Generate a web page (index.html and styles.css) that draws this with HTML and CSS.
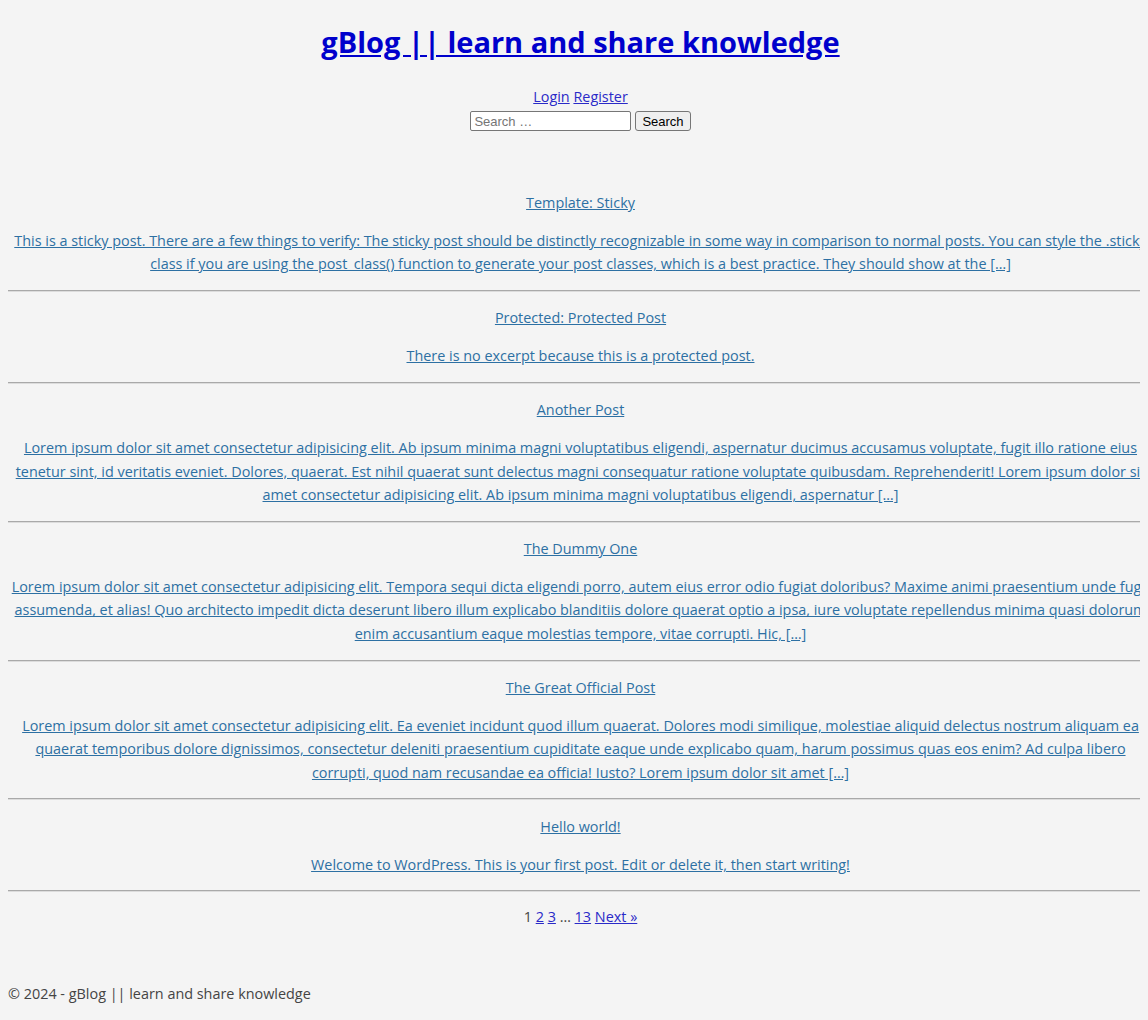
FILE: index.html
```html
<!DOCTYPE html>
<html lang="en">
<head>
<meta charset="utf-8">
<title>gBlog || learn and share knowledge</title>
<link rel="stylesheet" href="styles.css">
</head>
<body>
<div class="page">
  <header class="site-header">
    <h1 class="site-title"><a href="#">gBlog || learn and share knowledge</a></h1>
    <nav class="user-nav"><a href="#">Login</a> <a href="#">Register</a></nav>
    <form class="search-form">
      <input class="search-field" type="search" placeholder="Search …">
      <button class="search-submit" type="button">Search</button>
    </form>
  </header>

  <main class="posts">
    <article class="post">
      <p class="post-title"><a href="#">Template: Sticky</a></p>
      <p class="post-excerpt"><a href="#">This is a sticky post. There are a few things to verify: The sticky post should be distinctly recognizable in some way in comparison to normal posts. You can style the .sticky class if you are using the post_class() function to generate your post classes, which is a best practice. They should show at the […]</a></p>
    </article>
    <hr>
    <article class="post">
      <p class="post-title"><a href="#">Protected: Protected Post</a></p>
      <p class="post-excerpt"><a href="#">There is no excerpt because this is a protected post.</a></p>
    </article>
    <hr>
    <article class="post">
      <p class="post-title"><a href="#">Another Post</a></p>
      <p class="post-excerpt"><a href="#">Lorem ipsum dolor sit amet consectetur adipisicing elit. Ab ipsum minima magni voluptatibus eligendi, aspernatur ducimus accusamus voluptate, fugit illo ratione eius tenetur sint, id veritatis eveniet. Dolores, quaerat. Est nihil quaerat sunt delectus magni consequatur ratione voluptate quibusdam. Reprehenderit! Lorem ipsum dolor sit amet consectetur adipisicing elit. Ab ipsum minima magni voluptatibus eligendi, aspernatur […]</a></p>
    </article>
    <hr>
    <article class="post">
      <p class="post-title"><a href="#">The Dummy One</a></p>
      <p class="post-excerpt"><a href="#">Lorem ipsum dolor sit amet consectetur adipisicing elit. Tempora sequi dicta eligendi porro, autem eius error odio fugiat doloribus? Maxime animi praesentium unde fuga assumenda, et alias! Quo architecto impedit dicta deserunt libero illum explicabo blanditiis dolore quaerat optio a ipsa, iure voluptate repellendus minima quasi dolorum enim accusantium eaque molestias tempore, vitae corrupti. Hic, […]</a></p>
    </article>
    <hr>
    <article class="post">
      <p class="post-title"><a href="#">The Great Official Post</a></p>
      <p class="post-excerpt"><a href="#">Lorem ipsum dolor sit amet consectetur adipisicing elit. Ea eveniet incidunt quod illum quaerat. Dolores modi similique, molestiae aliquid delectus nostrum aliquam ea quaerat temporibus dolore dignissimos, consectetur deleniti praesentium cupiditate eaque unde explicabo quam, harum possimus quas eos enim? Ad culpa libero corrupti, quod nam recusandae ea officia! Iusto? Lorem ipsum dolor sit amet […]</a></p>
    </article>
    <hr>
    <article class="post">
      <p class="post-title"><a href="#">Hello world!</a></p>
      <p class="post-excerpt"><a href="#">Welcome to WordPress. This is your first post. Edit or delete it, then start writing!</a></p>
    </article>
    <hr>
    <p class="pagination"><span class="current">1</span> <a href="#">2</a> <a href="#">3</a> <span class="dots">…</span> <a href="#">13</a> <a href="#">Next »</a></p>
  </main>

  <footer class="site-footer">
    <p>© 2024 - gBlog || learn and share knowledge</p>
  </footer>
</div>
</body>
</html>
```

FILE: styles.css
```css
html, body {
  background: #f4f4f4;
}
body {
  margin: 8px;
  font-family: "Open Sans", "Liberation Sans", sans-serif;
  font-size: 14.4px;
  line-height: 23.4px;
  color: #333;
}
.page {
  width: 1145px;
}
.site-header {
  text-align: center;
}
.site-title {
  margin: 14px 0 24px;
  font-size: 29px;
  line-height: 40px;
  font-weight: 700;
}
.site-title a {
  color: #0000cc;
}
.user-nav {
  line-height: 22px;
}
.user-nav a {
  color: #2a2ac8;
}
.search-form {
  display: flex;
  justify-content: center;
  gap: 4px;
  margin-top: 3px;
}
.search-field {
  width: 161px;
  height: 20px;
  box-sizing: border-box;
  font-family: "Liberation Sans", Arial, sans-serif;
  font-size: 13px;
  padding: 1px 3px;
  border: 1px solid #767676;
  border-radius: 2px;
  background: #fff;
}
.search-field::placeholder {
  color: #757575;
}
.search-submit {
  height: 20px;
  font-family: "Liberation Sans", Arial, sans-serif;
  font-size: 13px;
  padding: 1px 6px;
  border: 1px solid #767676;
  border-radius: 3px;
  background: #efefef;
  color: #000;
}
.posts {
  margin-top: 60px;
  text-align: center;
}
.post p {
  margin: 1em 0;
}
.post a {
  color: #2d70a3;
}
hr {
  margin: 8px 0;
  border: 0;
  border-top: 1px solid #a9a9a9;
  border-bottom: 1px solid #dcdcdc;
  height: 0;
}
.pagination {
  margin: 13px 0;
  color: #444;
}
.pagination a {
  color: #2a2ac8;
}
.site-footer {
  margin-top: 53px;
  color: #444;
}
.site-footer p {
  margin: 0;
}
```
